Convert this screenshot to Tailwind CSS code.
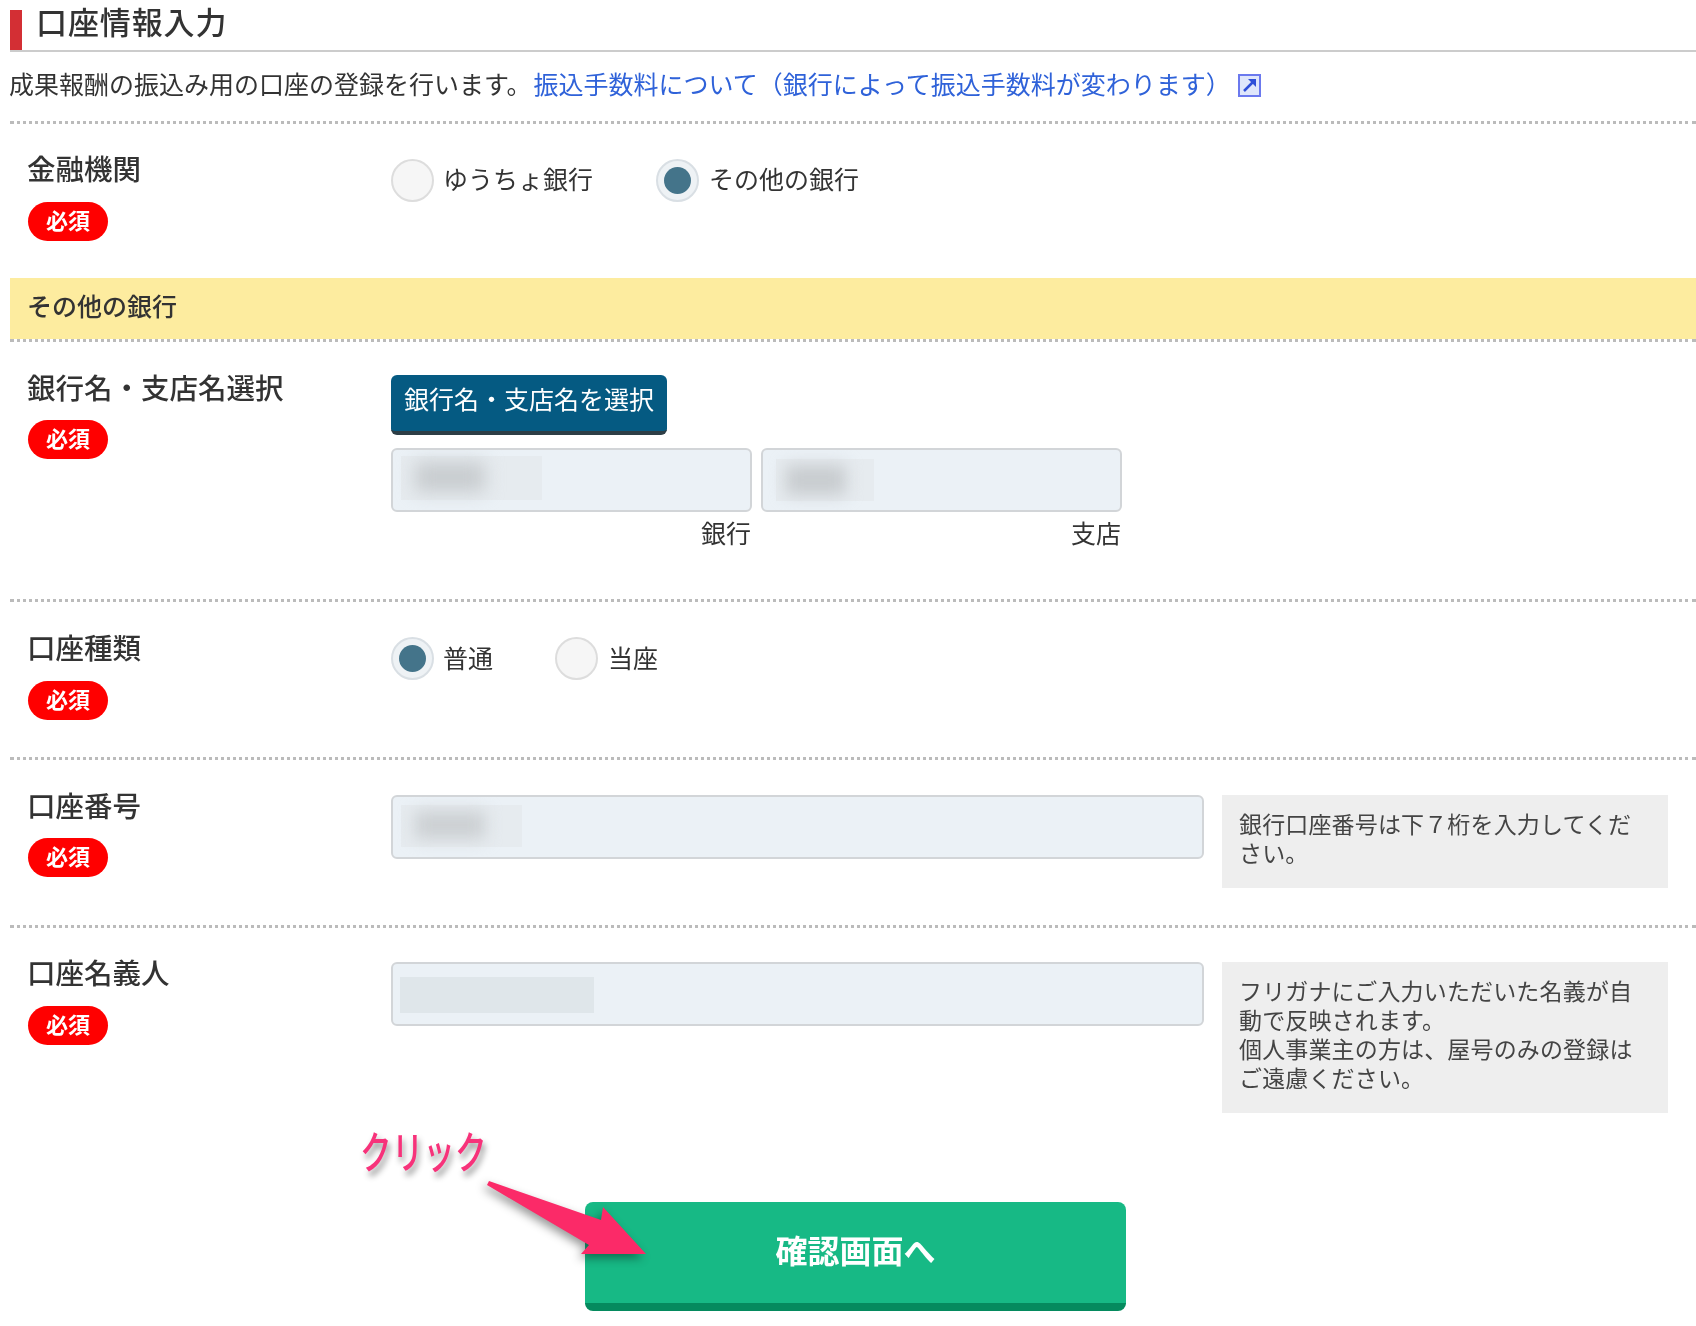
<!DOCTYPE html>
<html lang="ja">
<head>
<meta charset="UTF-8">
<title>口座情報入力</title>
<script src="https://cdn.jsdelivr.net/npm/@tailwindcss/browser@4"></script>
</head>
<body class="bg-white text-[#333] [font-family:'Noto_Sans_CJK_JP','Liberation_Sans',sans-serif]">
<div class="relative w-[1696px] h-[1326px] blur-[0.4px]">

  <!-- 見出し -->
  <div class="ml-[10px] h-[52px] flex items-start border-b-2 border-[#ccc]">
    <div class="mt-[10px] w-[12px] h-[40px] bg-[#d32f34]"></div>
    <h1 class="ml-[14px] text-[31px] font-medium leading-[46px] -mt-[2px] tracking-[0.9px]">口座情報入力</h1>
  </div>
  <p class="h-[69px] pl-[9px] pt-[13px] text-[25px] leading-[36px] flex items-start">
    成果報酬の振込み用の口座の登録を行います。<a href="#" class="ml-[2px] text-[#2f62d9]">振込手数料について（銀行によって振込手数料が変わります）</a>
    <svg class="ml-[7px] mt-[9px] w-[23px] h-[23px]" viewBox="0 0 23 23" fill="#dfe6fb"><rect x="1" y="1" width="21" height="21" stroke="#6b79ee" stroke-width="2"/><path d="M6 17 16 7" stroke="#2f4fd8" stroke-width="2.5" fill="none"/><path d="M10 5h8v8z" fill="#2f4fd8"/></svg>
  </p>

  <!-- 金融機関 -->
  <div class="ml-[10px] h-[157px] border-t-[3px] border-dotted border-[#bbb] grid grid-cols-[381px_1fr]">
    <div class="pl-[17px] pt-[24px]">
      <div class="text-[28.5px] font-medium leading-[40px]">金融機関</div>
      <div class="mt-[14px] ml-px w-[80px] h-[39px] rounded-full bg-[#f00] text-white text-[22px] font-bold leading-none pb-[5px] flex items-center justify-center">必須</div>
    </div>
    <div class="pt-[35px] flex items-start text-[25px]">
      <span class="w-[43px] h-[43px] rounded-full border-2 border-[#ddd] bg-[#f6f6f6]"></span>
      <span class="ml-[9px] leading-[39px]">ゆうちょ銀行</span>
      <span class="ml-[63px] w-[43px] h-[43px] rounded-full border-2 border-[#d9dfe4] bg-[#eef2f5] flex items-center justify-center"><span class="w-[27px] h-[27px] rounded-full bg-[#44748a]"></span></span>
      <span class="ml-[10px] leading-[39px]">その他の銀行</span>
    </div>
  </div>

  <!-- その他の銀行 -->
  <div class="ml-[10px] h-[61px] pl-[17px] pb-[6px] bg-[#fdec9f] flex items-center text-[25px] font-medium">その他の銀行</div>

  <!-- 銀行名・支店名選択 -->
  <div class="ml-[10px] h-[260px] border-t-[3px] border-dotted border-[#bbb] grid grid-cols-[381px_1fr]">
    <div class="pl-[17px] pt-[25px]">
      <div class="text-[28.5px] font-medium leading-[40px]">銀行名・支店名選択</div>
      <div class="mt-[13px] ml-px w-[80px] h-[39px] rounded-full bg-[#f00] text-white text-[22px] font-bold leading-none pb-[5px] flex items-center justify-center">必須</div>
    </div>
    <div class="pt-[33px]">
      <button class="w-[276px] h-[60px] pb-[10px] rounded-md bg-[#055a82] border-b-4 border-[#2d3e46] text-white text-[25px] leading-none">銀行名・支店名を選択</button>
      <div class="mt-[13px] flex gap-[9px]">
        <div class="w-[361px]">
          <div class="relative h-[64px] rounded-md border-2 border-[#d2d5d8] bg-[#ebf1f6] overflow-hidden">
            <div class="absolute left-[8px] top-[6px] w-[141px] h-[44px] bg-[#e6ebef]"><div class="mx-[14px] my-[6px] w-[70px] h-[30px] bg-[#c8cccf] blur-[9px]"></div></div>
          </div>
          <div class="mt-[1px] text-right text-[25px] leading-[38px] pr-[1px]">銀行</div>
        </div>
        <div class="w-[361px]">
          <div class="relative h-[64px] rounded-md border-2 border-[#d2d5d8] bg-[#ebf1f6] overflow-hidden">
            <div class="absolute left-[13px] top-[9px] w-[98px] h-[42px] bg-[#e6ebef]"><div class="mx-[10px] my-[6px] w-[60px] h-[30px] bg-[#c8cccf] blur-[8px]"></div></div>
          </div>
          <div class="mt-[1px] text-right text-[25px] leading-[38px] pr-[1px]">支店</div>
        </div>
      </div>
    </div>
  </div>

  <!-- 口座種類 -->
  <div class="ml-[10px] h-[158px] border-t-[3px] border-dotted border-[#bbb] grid grid-cols-[381px_1fr]">
    <div class="pl-[17px] pt-[25px]">
      <div class="text-[28.5px] font-medium leading-[40px]">口座種類</div>
      <div class="mt-[14px] ml-px w-[80px] h-[39px] rounded-full bg-[#f00] text-white text-[22px] font-bold leading-none pb-[5px] flex items-center justify-center">必須</div>
    </div>
    <div class="pt-[35px] flex items-start text-[25px]">
      <span class="w-[43px] h-[43px] rounded-full border-2 border-[#d9dfe4] bg-[#eef2f5] flex items-center justify-center"><span class="w-[27px] h-[27px] rounded-full bg-[#44748a]"></span></span>
      <span class="ml-[9px] leading-[41px]">普通</span>
      <span class="ml-[62px] w-[43px] h-[43px] rounded-full border-2 border-[#ddd] bg-[#f6f6f6]"></span>
      <span class="ml-[10px] leading-[41px]">当座</span>
    </div>
  </div>

  <!-- 口座番号 -->
  <div class="ml-[10px] h-[168px] border-t-[3px] border-dotted border-[#bbb] grid grid-cols-[381px_1fr]">
    <div class="pl-[17px] pt-[25px]">
      <div class="text-[28.5px] font-medium leading-[40px]">口座番号</div>
      <div class="mt-[13px] ml-px w-[80px] h-[39px] rounded-full bg-[#f00] text-white text-[22px] font-bold leading-none pb-[5px] flex items-center justify-center">必須</div>
    </div>
    <div class="pt-[35px] flex items-start gap-[18px]">
      <div class="relative w-[813px] h-[64px] rounded-md border-2 border-[#d2d5d8] bg-[#ebf1f6] overflow-hidden">
        <div class="absolute left-[8px] top-[8px] w-[121px] h-[42px] bg-[#e6ebef]"><div class="mx-[14px] my-[6px] w-[70px] h-[28px] bg-[#ccd0d3] blur-[8px]"></div></div>
      </div>
      <div class="w-[446px] h-[93px] pl-[17px] pr-[34px] pt-[14px] bg-[#eee] text-[23px] tracking-[0.15px] leading-[29px] text-[#444]">銀行口座番号は下７桁を入力してください。</div>
    </div>
  </div>

  <!-- 口座名義人 -->
  <div class="ml-[10px] border-t-[3px] border-dotted border-[#bbb] grid grid-cols-[381px_1fr]">
    <div class="pl-[17px] pt-[24px]">
      <div class="text-[28.5px] font-medium leading-[40px]">口座名義人</div>
      <div class="mt-[14px] ml-px w-[80px] h-[39px] rounded-full bg-[#f00] text-white text-[22px] font-bold leading-none pb-[5px] flex items-center justify-center">必須</div>
    </div>
    <div class="pt-[34px] flex items-start gap-[18px]">
      <div class="relative w-[813px] h-[64px] rounded-md border-2 border-[#d2d5d8] bg-[#ebf1f6] overflow-hidden">
        <div class="absolute left-[7px] top-[13px] w-[194px] h-[36px] bg-[#dfe6ea]"></div>
      </div>
      <div class="w-[446px] h-[151px] pl-[17px] pr-[16px] pt-[14px] bg-[#eee] text-[23px] tracking-[0.15px] leading-[29px] text-[#444]">フリガナにご入力いただいた名義が自動で反映されます。<br>個人事業主の方は、屋号のみの登録はご遠慮ください。</div>
    </div>
  </div>

  <!-- 確認ボタン -->
  <button class="block ml-[585px] mt-[89px] w-[541px] h-[109px] pb-[7px] rounded-lg bg-[#17b985] border-b-8 border-[#058a5e] text-white text-[32px] font-bold leading-none">確認画面へ</button>

  <!-- 注釈 -->
  <div class="absolute left-[360px] top-[1123px] origin-left scale-x-[0.72] text-[44px] font-medium leading-[54px] text-[#f7327a] whitespace-nowrap [text-shadow:3px_5px_8px_rgba(0,0,0,0.45)]">クリック</div>
  <svg class="absolute left-0 top-0 w-[1696px] h-[1326px] pointer-events-none drop-shadow-[-3px_4px_5px_rgba(0,0,0,0.4)]" viewBox="0 0 1696 1326">
    <polygon points="489,1181 601,1220 603,1207 646,1254 581,1254 589,1245 487,1185" fill="#fb2a68"/>
  </svg>
</div>
</body>
</html>
